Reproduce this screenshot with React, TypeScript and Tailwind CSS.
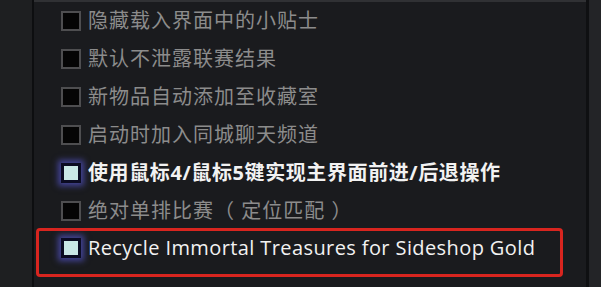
import React from "react";

const items = [
  { label: "隐藏载入界面中的小贴士", checked: false },
  { label: "默认不泄露联赛结果", checked: false },
  { label: "新物品自动添加至收藏室", checked: false },
  { label: "启动时加入同城聊天频道", checked: false },
  { label: "使用鼠标4/鼠标5键实现主界面前进/后退操作", checked: true },
  { label: "绝对单排比赛（ 定位匹配 ）", checked: false },
];

function Box({ checked }: { checked: boolean }) {
  if (checked) {
    return (
      <span className="block h-[20px] w-[20px] shrink-0 border-[3px] border-[#0b0b22] bg-[#c9e7e6] shadow-[0_0_6px_3px_rgba(80,80,190,0.75)]" />
    );
  }
  return <span className="block h-[20px] w-[20px] shrink-0 border-2 border-[#4e4e50] bg-[#050505]" />;
}

export default function App() {
  return (
    <div
      className="flex h-[287px] w-[601px] overflow-hidden bg-[#1f2023]"
      style={{ fontFamily: '"Open Sans", "Noto Sans CJK SC", sans-serif' }}
    >
      <div className="w-[32px] shrink-0 bg-[#1e1f21]" />
      <div className="w-[2px] shrink-0 bg-[#0d0e10]" />
      <div className="flex w-[552px] shrink-0 flex-col border-t-2 border-[#303134] bg-[#1a1b1e] pl-[27px]">
        {items.map((it) => (
          <div key={it.label} className="flex h-[38px] items-center gap-[7px]">
            <Box checked={it.checked} />
            <span
              className={
                it.checked
                  ? "text-[20px] font-bold tracking-[0.6px] text-[#f2f2f2]"
                  : "text-[20px] tracking-[1px] text-[#8c8c8c]"
              }
            >
              {it.label}
            </span>
          </div>
        ))}
        <div className="-ml-[25px] -mt-[2px] flex h-[49px] w-[527px] items-center gap-[7px] rounded-[4px] border-[3px] border-[#d8251f] pb-[10px] pl-[22px]">
          <Box checked />
          <span className="text-[20px] tracking-[0.4px] text-[#f2f2f2]">
            Recycle Immortal Treasures for Sideshop Gold
          </span>
        </div>
      </div>
      <div className="w-[3px] shrink-0 bg-[#0f1012]" />
      <div className="flex-1 bg-[#232427]" />
    </div>
  );
}
